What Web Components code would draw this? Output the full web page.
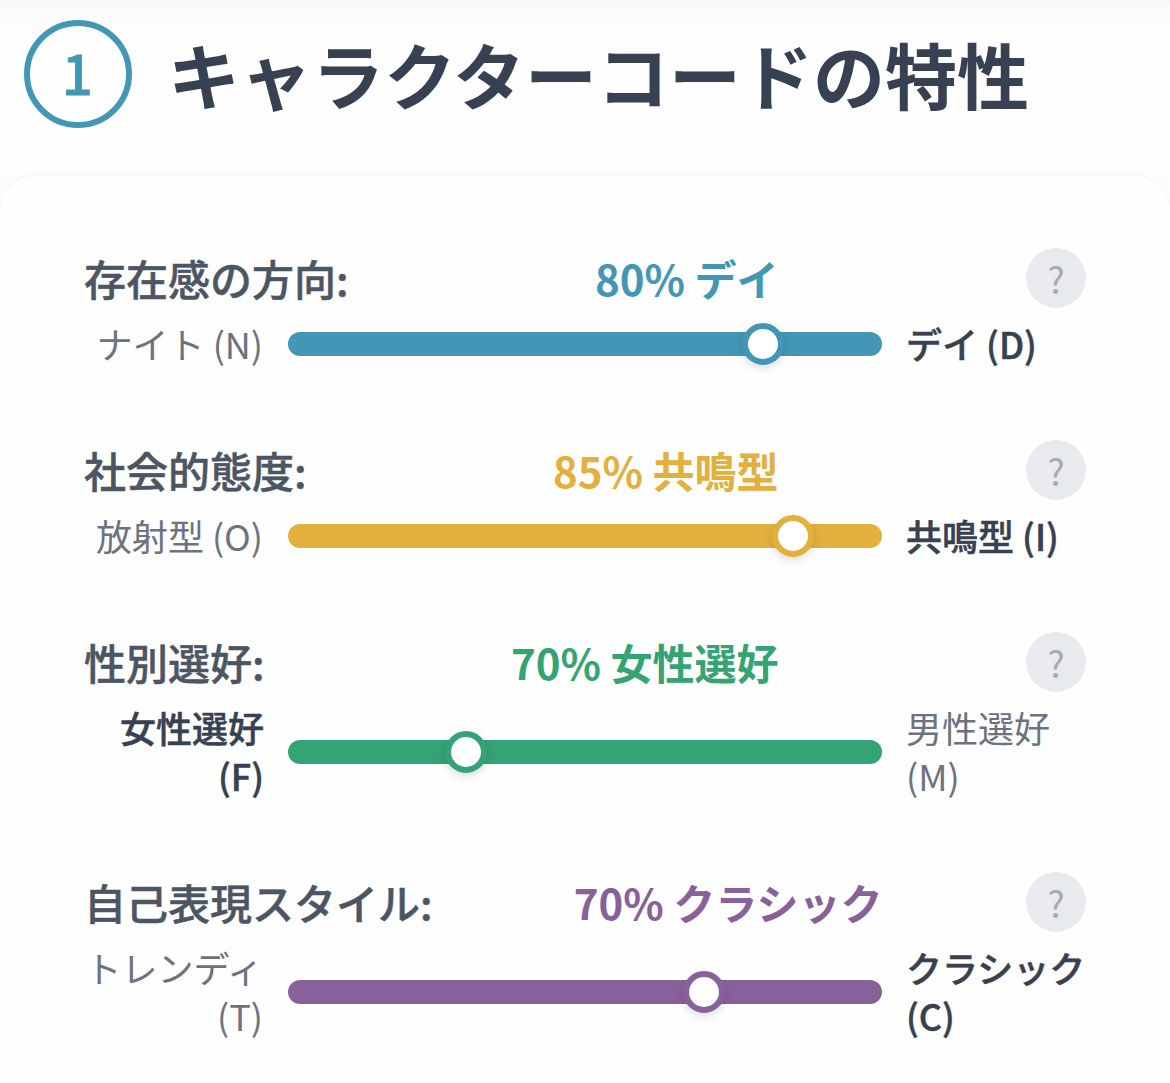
<!DOCTYPE html>
<html lang="ja"><head><meta charset="utf-8"><title>キャラクターコードの特性</title>
<style>
html{background:#fff}
body{margin:0;height:1083px;overflow:hidden;background:linear-gradient(#f7f7f7,#fbfbfb 12px,#fcfcfc 24px,#fefefe 42px,#fefefe 165px,#fcfcfc 176px,#fefefe 220px);font-family:"Noto Sans CJK JP",sans-serif;color:#4b5563}
</style></head><body>
<character-section>
<trait-row label="存在感の方向:" result="80% デイ" left="ナイト (N)" right="デイ (D)" value="80" active="right" color="#4397b5"></trait-row>
<trait-row label="社会的態度:" result="85% 共鳴型" left="放射型 (O)" right="共鳴型 (I)" value="85" active="right" color="#e3af3d"></trait-row>
<trait-row label="性別選好:" result="70% 女性選好" left="女性選好 (F)" right="男性選好 (M)" value="30" active="left" color="#34a474"></trait-row>
<trait-row label="自己表現スタイル:" result="70% クラシック" left="トレンディ (T)" right="クラシック (C)" value="70" active="right" color="#88619a" wide></trait-row>
</character-section>
<script>
customElements.define('character-section', class extends HTMLElement{
constructor(){super();this.attachShadow({mode:'open'}).innerHTML=`<style>
:host{display:block}
header{display:flex;align-items:center;height:148px;padding:0 24px;gap:36px}
.num{box-sizing:border-box;width:108px;height:108px;border:6px solid #4298b4;border-radius:50%;display:flex;align-items:center;justify-content:center;color:#4298b4;font-size:54px;font-weight:500;line-height:92px;padding:0 1px 4px 0;-webkit-text-stroke:.8px currentColor}
h2{margin:0;padding-bottom:2px;font-size:72px;line-height:96px;font-weight:700;color:#374151;white-space:nowrap}
.card{box-sizing:border-box;margin-top:28px;height:940px;border-radius:36px 36px 0 0;background:#fefefe;padding:72px 84px 0;display:flex;flex-direction:column;gap:72px;box-shadow:0 0 4px #0000000c}
</style><header><div class="num">1</div><h2>キャラクターコードの特性</h2></header><section class="card"><slot></slot></section>`}
});
customElements.define('trait-row', class extends HTMLElement{
connectedCallback(){const a=n=>this.getAttribute(n);
this.attachShadow({mode:'open'}).innerHTML=`<style>
:host{display:block;--c:${a('color')}}
.head{display:flex;align-items:center;height:60px}
.label,.result{font-size:42px;line-height:60px;font-weight:500;white-space:nowrap}
.label{-webkit-text-stroke:.5px currentColor}
.result{font-weight:700;color:var(--c);margin-left:auto;margin-right:${this.hasAttribute('wide')?143.5:247.5}px}
.q{width:60px;height:60px;border-radius:50%;background:#e8eaed;color:#a6a9ae;font-size:36px;line-height:60px;text-align:center}
.scale{display:flex;align-items:center;gap:24px;margin-top:12px}
.side{box-sizing:border-box;width:180px;margin:-1px 0 1px;font-size:36px;line-height:48px;color:#6b7280}
.l{text-align:right;padding-right:1px}.l.active{padding-right:0}
.active{color:#374151;font-weight:500;-webkit-text-stroke:.5px currentColor}
.track{width:594px;height:24px;border-radius:12px;background:var(--c);display:flex;align-items:center}
.thumb{box-sizing:border-box;width:42px;height:42px;border-radius:50%;border:6px solid var(--c);background:#fff;margin-left:calc(${a('value')}% - 21px);box-shadow:0 3px 9px #0002;flex:none}
</style><div class="head"><span class="label">${a('label')}</span><span class="result">${a('result')}</span><span class="q">?</span></div>
<div class="scale"><div class="side l ${a('active')=='left'?'active':''}">${a('left')}</div><div class="track"><div class="thumb"></div></div><div class="side ${a('active')=='right'?'active':''}">${a('right')}</div></div>`}
});
</script></body></html>
